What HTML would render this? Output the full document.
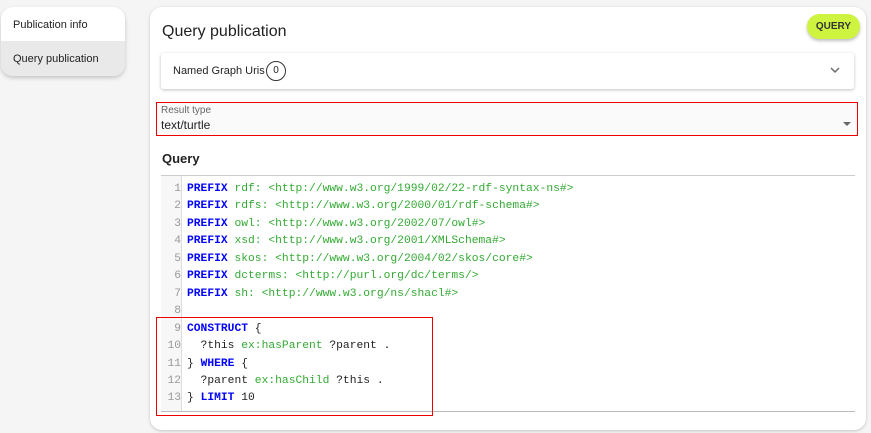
<!DOCTYPE html>
<html><head><style>
*{box-sizing:border-box;margin:0;padding:0}
body{width:871px;height:433px;background:#f5f5f5;font-family:"Liberation Sans",Roboto,sans-serif;position:relative;overflow:hidden;color:#222}
.side{position:absolute;left:1px;top:7px;width:124px;height:69px;background:#fff;border-radius:12px;box-shadow:0 2px 4px rgba(0,0,0,.2);overflow:hidden;font-size:11px}
.side div{height:34px;padding-left:12px;line-height:36px}
.side .a{background:#e9e9e9;height:35px;line-height:37px}
.main{position:absolute;left:150px;top:7px;width:716px;height:423px;background:#fff;border-radius:12px;box-shadow:0 1px 3px rgba(0,0,0,.2)}
h1{position:absolute;left:12px;top:16px;font-size:16px;font-weight:400;color:#222}
.btn{position:absolute;left:657px;top:7px;width:53px;height:25px;background:#cff43f;border-radius:13px;font-size:10px;font-weight:bold;text-align:center;line-height:25px;color:#333;box-shadow:0 2px 3px rgba(0,0,0,.25)}
.exp{position:absolute;left:11px;top:46px;width:693px;height:36px;background:#fff;box-shadow:0 1px 3px rgba(0,0,0,.25);border-radius:3px;font-size:11px}
.exp span.t{position:absolute;left:12px;top:12px}
.exp .c{position:absolute;left:105px;top:8px;width:20px;height:20px;border:1.3px solid #333;border-radius:50%;font-size:10px;text-align:center;line-height:18px}
.res{position:absolute;left:6px;top:95px;width:702px;height:34px;border:1.5px solid #e00;background:#fafafa}
.res .l{position:absolute;left:4px;top:2px;font-size:10px;color:#666}
.res .v{position:absolute;left:4px;top:15px;font-size:12px}
.res .ar{position:absolute;right:6px;top:19px;border-left:4px solid transparent;border-right:4px solid transparent;border-top:4px solid #666}
h2{position:absolute;left:12px;top:144px;font-size:13px;font-weight:bold}
.ed{position:absolute;left:11px;top:168px;width:694px;height:237px;border-top:1px solid #ccc;border-bottom:1px solid #bbb;background:#fff}
.gut{position:absolute;left:0;top:0;width:21px;height:100%;background:#f7f7f7;border-right:1px solid #ddd}
pre{position:absolute;left:0;top:5px;font-family:"Liberation Mono",monospace;font-size:11.3px;line-height:17.45px;color:#222}
.n{display:inline-block;width:20px;text-align:right;color:#999;margin-right:6px}
.k{color:#00f;font-weight:bold}.g{color:#3a3}
.red2{position:absolute;left:6px;top:310px;width:277px;height:99px;border:1.5px solid #e00}
</style></head><body>
<div class="side"><div>Publication info</div><div class="a">Query publication</div></div>
<div class="main">
<h1>Query publication</h1>
<div class="btn">QUERY</div>
<div class="exp"><span class="t">Named Graph Uris</span><span class="c">0</span>
<svg style="position:absolute;right:14px;top:14px" width="10" height="7" viewBox="0 0 10 7"><path d="M1 1l4 4 4-4" fill="none" stroke="#666" stroke-width="1.4"/></svg></div>
<div class="res"><div class="l">Result type</div><div class="v">text/turtle</div><div class="ar"></div></div>
<h2>Query</h2>
<div class="ed"><div class="gut"></div>
<pre><span class="n">1</span><span class="k">PREFIX</span> <span class="g">rdf: &lt;http://www.w3.org/1999/02/22-rdf-syntax-ns#&gt;</span>
<span class="n">2</span><span class="k">PREFIX</span> <span class="g">rdfs: &lt;http://www.w3.org/2000/01/rdf-schema#&gt;</span>
<span class="n">3</span><span class="k">PREFIX</span> <span class="g">owl: &lt;http://www.w3.org/2002/07/owl#&gt;</span>
<span class="n">4</span><span class="k">PREFIX</span> <span class="g">xsd: &lt;http://www.w3.org/2001/XMLSchema#&gt;</span>
<span class="n">5</span><span class="k">PREFIX</span> <span class="g">skos: &lt;http://www.w3.org/2004/02/skos/core#&gt;</span>
<span class="n">6</span><span class="k">PREFIX</span> <span class="g">dcterms: &lt;http://purl.org/dc/terms/&gt;</span>
<span class="n">7</span><span class="k">PREFIX</span> <span class="g">sh: &lt;http://www.w3.org/ns/shacl#&gt;</span>
<span class="n">8</span>
<span class="n">9</span><span class="k">CONSTRUCT</span> {
<span class="n">10</span>  ?this <span class="g">ex:hasParent</span> ?parent .
<span class="n">11</span>} <span class="k">WHERE</span> {
<span class="n">12</span>  ?parent <span class="g">ex:hasChild</span> ?this .
<span class="n">13</span>} <span class="k">LIMIT</span> 10</pre>
</div>
<div class="red2"></div>
</div>
</body></html>
